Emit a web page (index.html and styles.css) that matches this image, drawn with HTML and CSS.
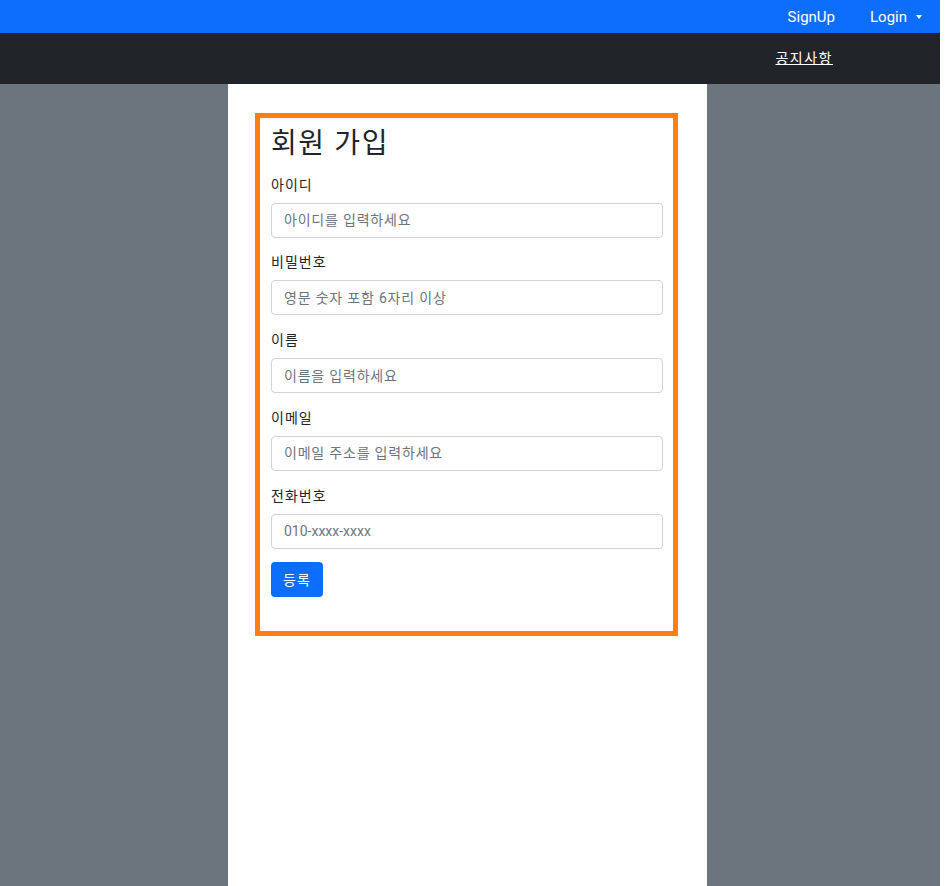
FILE: index.html
```html
<!DOCTYPE html>
<html lang="ko">
<head>
<meta charset="utf-8">
<title>회원 가입</title>
<link rel="stylesheet" href="styles.css">
</head>
<body>
<div class="page">
  <header class="topbar">
    <a class="top-link" href="#">SignUp</a>
    <a class="top-link dropdown" href="#">Login<span class="caret"></span></a>
  </header>
  <nav class="subbar">
    <a class="notice" href="#">공지사항</a>
  </nav>
  <main class="main">
    <div class="column">
      <form class="signup">
        <h3 class="title">회원 가입</h3>
        <div class="group">
          <label class="label">아이디</label>
          <input class="input" type="text" placeholder="아이디를 입력하세요">
        </div>
        <div class="group">
          <label class="label">비밀번호</label>
          <input class="input" type="password" placeholder="영문 숫자 포함 6자리 이상">
        </div>
        <div class="group">
          <label class="label">이름</label>
          <input class="input" type="text" placeholder="이름을 입력하세요">
        </div>
        <div class="group">
          <label class="label">이메일</label>
          <input class="input" type="text" placeholder="이메일 주소를 입력하세요">
        </div>
        <div class="group">
          <label class="label">전화번호</label>
          <input class="input input-latin" type="text" placeholder="010-xxxx-xxxx">
        </div>
        <button class="btn" type="button">등록</button>
      </form>
    </div>
  </main>
</div>
</body>
</html>
```

FILE: styles.css
```css
html { background: #ffffff; }
body {
  margin: 0;
  font-family: Roboto, "Noto Sans CJK KR", sans-serif;
  font-size: 14px;
  line-height: 1.5;
  color: #212529;
}
.page { width: 940px; }
.topbar {
  height: 33px;
  box-sizing: border-box;
  padding-top: 1px;
  background: #0d6efd;
  display: flex;
  justify-content: flex-end;
  align-items: center;
  padding-right: 18px;
  gap: 35px;
}
.top-link {
  color: #ffffff;
  text-decoration: none;
  font-size: 15px;
  display: flex;
  align-items: center;
}
.caret {
  display: inline-block;
  margin-left: 9px;
  width: 0;
  height: 0;
  border-top: 4px solid #ffffff;
  border-left: 3.5px solid transparent;
  border-right: 3.5px solid transparent;
}
.subbar {
  height: 51px;
  background: #212529;
  display: flex;
  justify-content: flex-end;
  align-items: center;
  padding-right: 107px;
}
.notice {
  color: #ffffff;
  font-size: 14px;
  letter-spacing: 1.5px;
  text-decoration: underline;
}
.main {
  background: #6c757d;
  min-height: 802px;
  display: grid;
  grid-template-columns: 228px 479px 1fr;
}
.column {
  grid-column: 2;
  background: #ffffff;
  padding: 29px 0 0 27px;
}
.signup {
  border: 5px solid #fd7e14;
  padding: 9px 10px 34px 11px;
  box-sizing: border-box;
  width: 423px;
}
.title {
  margin: 0 0 14px;
  font-size: 28px;
  font-weight: 400;
  line-height: 1.2;
  letter-spacing: 1.6px;
}
.group { margin-bottom: 14.75px; }
.group:last-of-type { margin-bottom: 13px; }
.label {
  display: block;
  margin-bottom: 7px;
  line-height: 21px;
  letter-spacing: 1px;
}
.input {
  display: block;
  width: 100%;
  box-sizing: border-box;
  height: 35px;
  padding: 6px 12px;
  font-family: inherit;
  font-size: 14px;
  line-height: 21px;
  color: #212529;
  background: #ffffff;
  border: 1px solid #ced4da;
  border-radius: 4px;
}
.input::placeholder { color: #6c757d; letter-spacing: 0.8px; }
.input-latin::placeholder { letter-spacing: 0; }
.btn {
  display: block;
  height: 35px;
  width: 52px;
  padding: 0;
  font-family: inherit;
  font-size: 14px;
  letter-spacing: 1px;
  color: #ffffff;
  background: #0d6efd;
  border: none;
  border-radius: 4px;
}
```
